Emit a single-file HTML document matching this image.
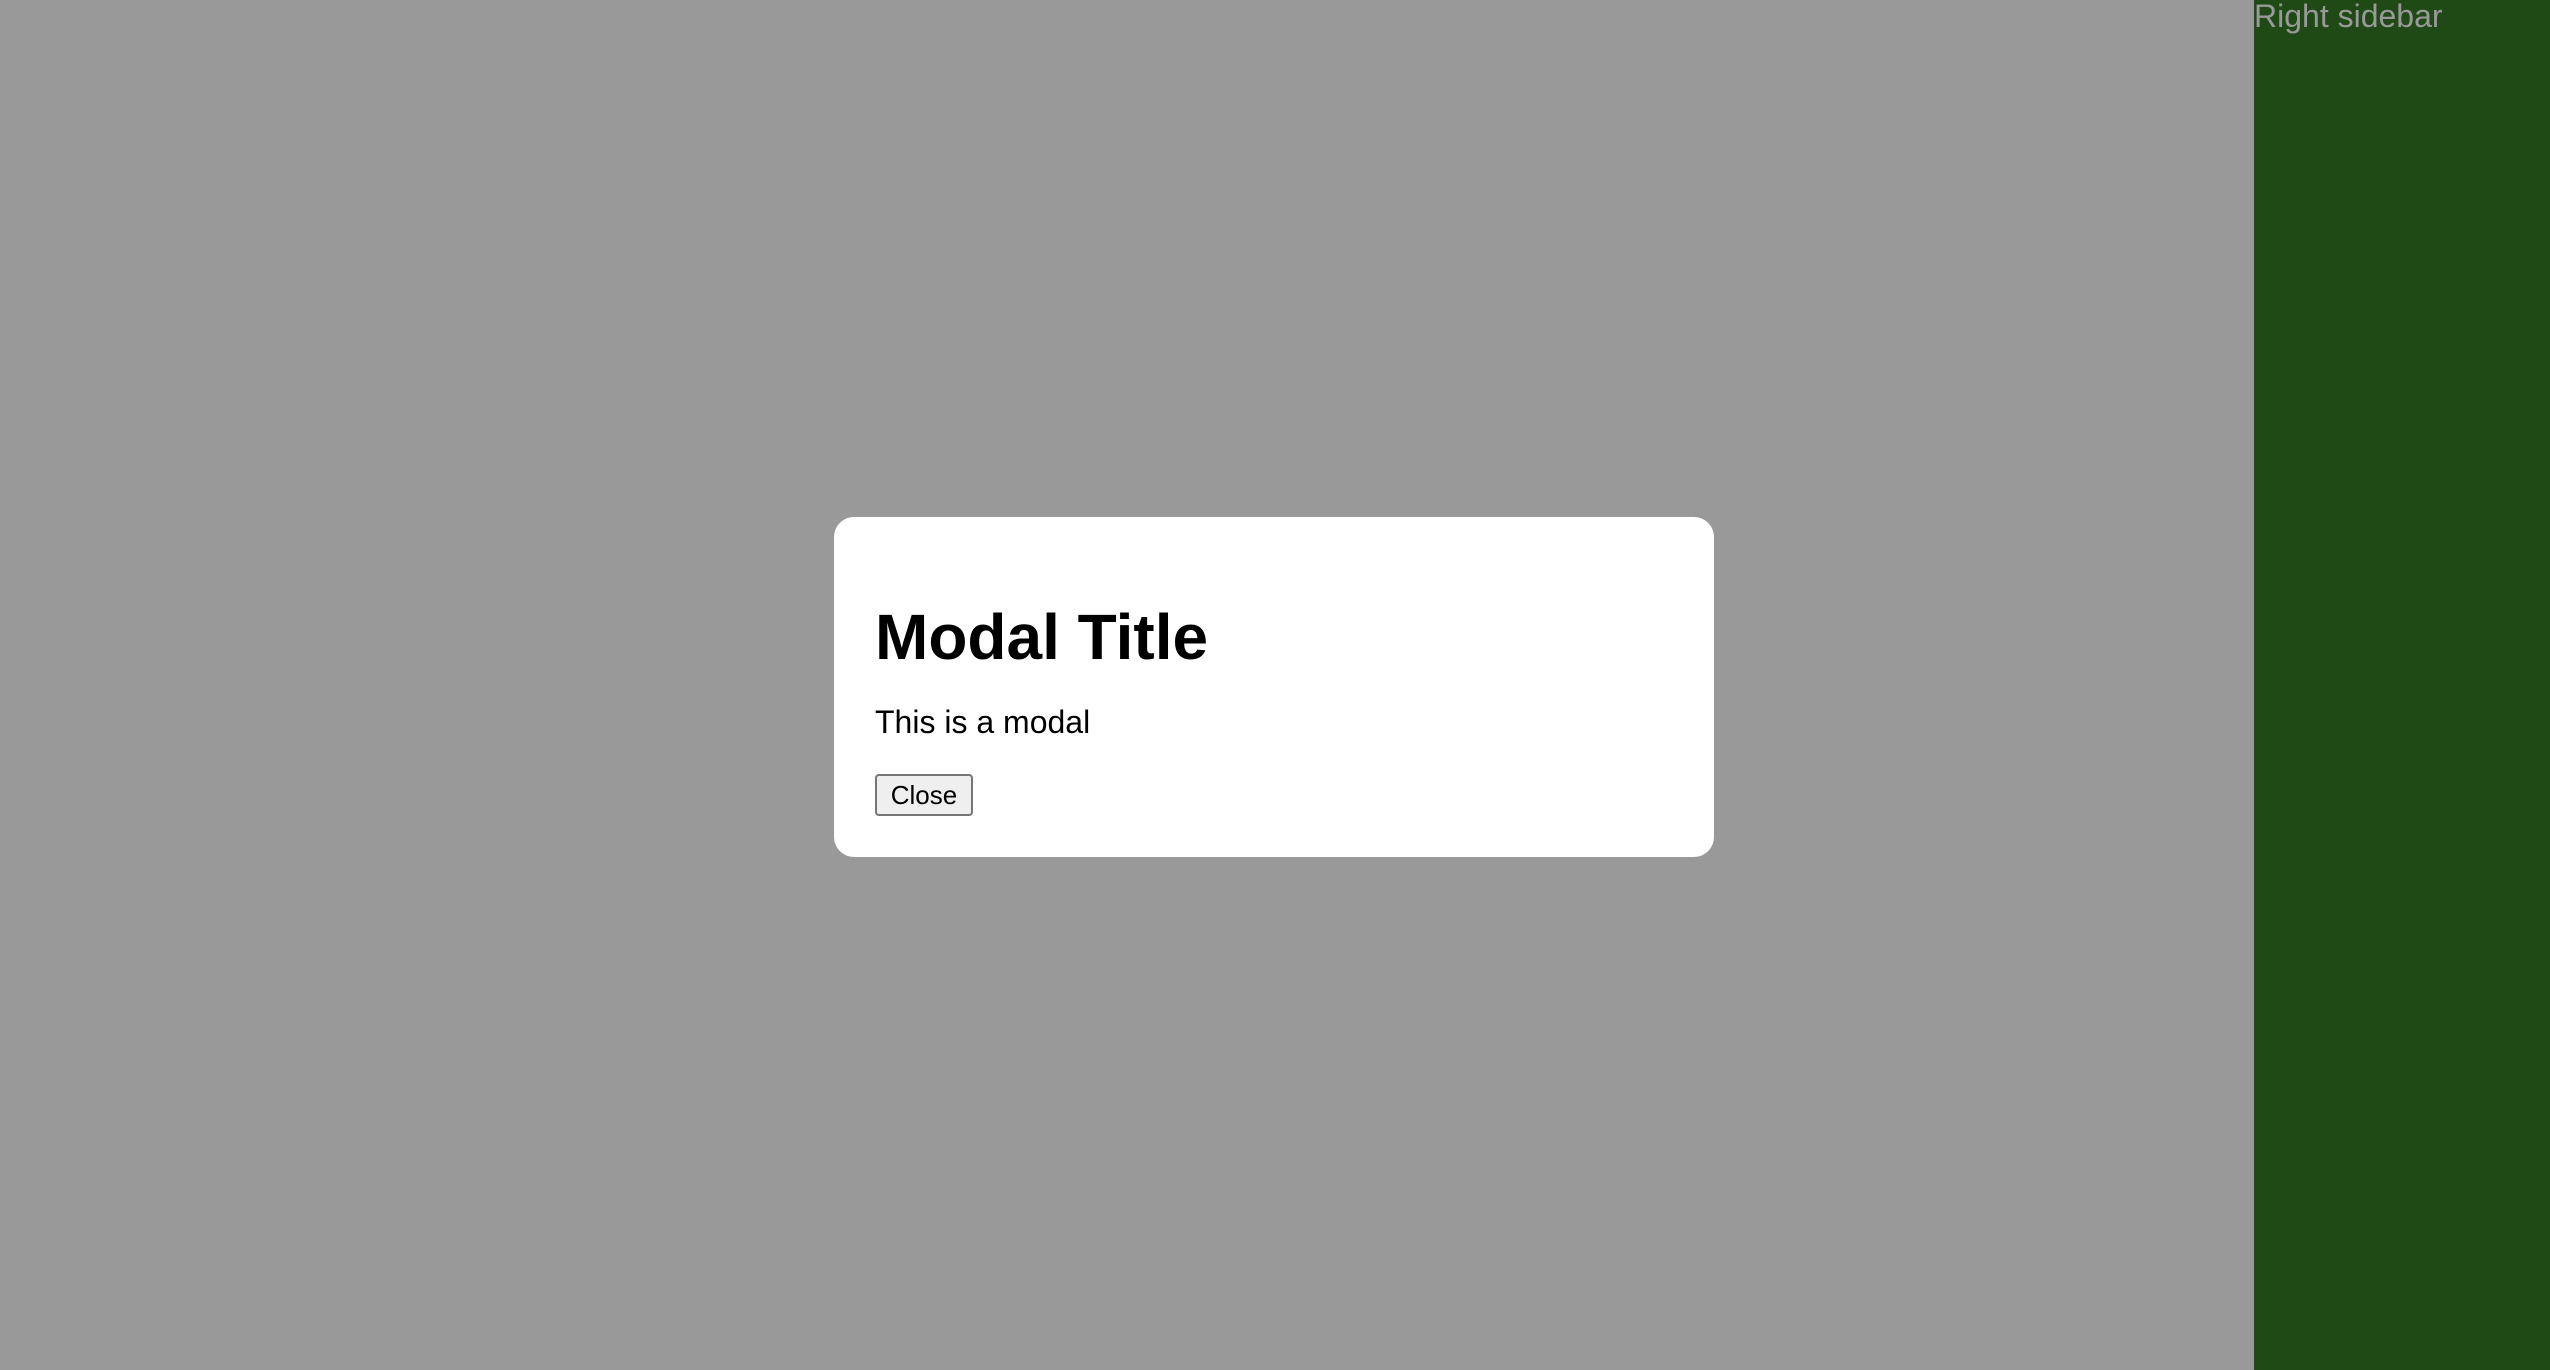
<!DOCTYPE html>
<html><head><meta charset="utf-8"><style>
html,body{margin:0;padding:0;width:2550px;height:1370px;overflow:hidden;background:#999;font-family:"Liberation Sans",Arial,sans-serif;}
.side{position:absolute;left:2254px;top:0;width:296px;height:1370px;background:#1f4a15;}
.side span{position:absolute;left:0;top:0;font-size:32px;line-height:32px;color:#999;white-space:nowrap;}
.modal{position:absolute;left:834px;top:517px;width:880px;height:340px;background:#fff;border-radius:20px;}
.t{position:absolute;left:875px;top:605px;font-size:64px;line-height:64px;font-weight:bold;color:#000;white-space:nowrap;}
.p{position:absolute;left:875px;top:706px;font-size:32px;line-height:32px;color:#000;white-space:nowrap;}
.b{position:absolute;left:875px;top:774px;width:98px;height:42px;box-sizing:border-box;border:2px solid #767676;background:#efefef;border-radius:4px;font-size:26px;line-height:38px;text-align:center;color:#000;}
</style></head><body>
<div class="side"><span>Right sidebar</span></div>
<div class="modal"></div>
<div class="t">Modal Title</div>
<div class="p">This is a modal</div>
<div class="b">Close</div>
</body></html>
